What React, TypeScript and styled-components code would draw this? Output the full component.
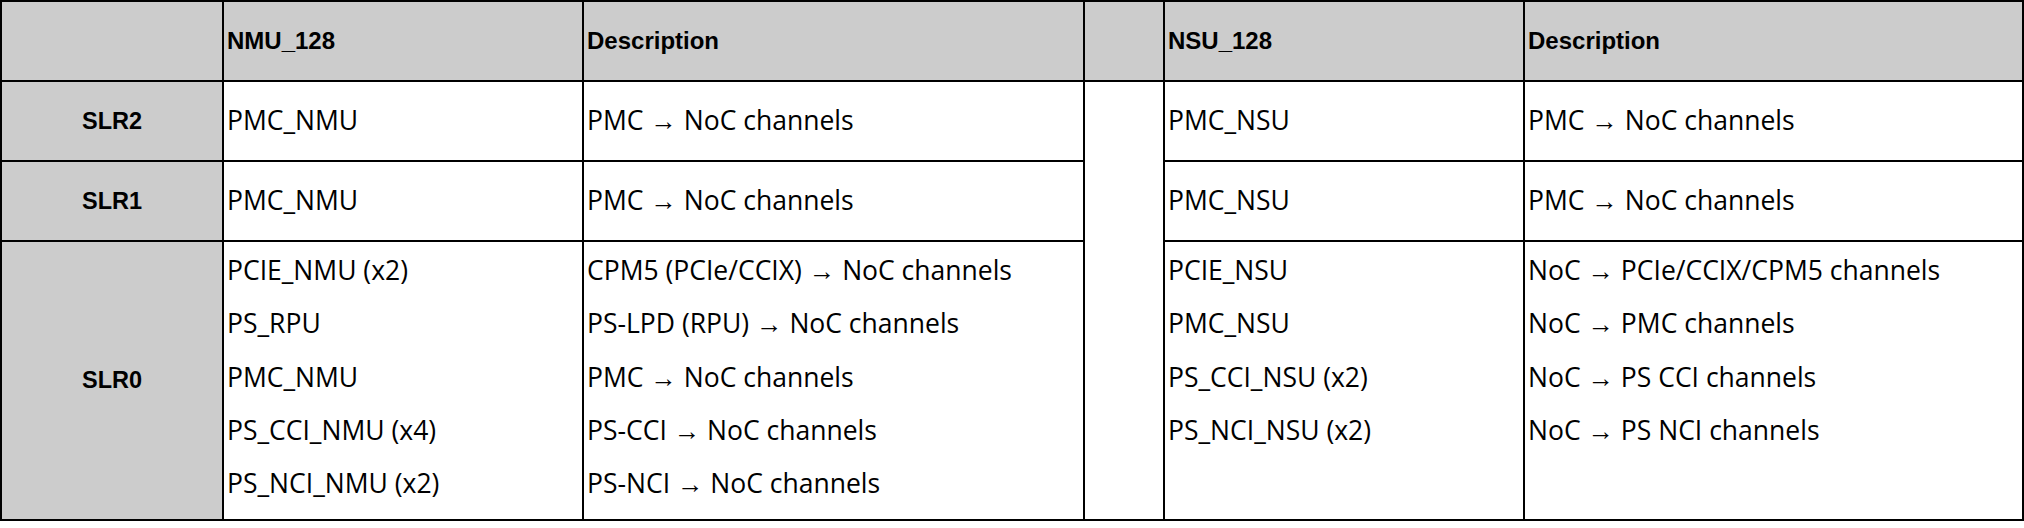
import styled, { createGlobalStyle } from 'styled-components';

const GlobalStyle = createGlobalStyle`
  html, body {
    margin: 0;
    padding: 0;
    background: #ffffff;
  }
`

const Grid = styled.table`
  width: 2024px;
  table-layout: fixed;
  border-collapse: collapse;
  border: 2px solid #000000;
  font-family: "Open Sans", "Noto Sans", sans-serif;
  color: #000000;
`

const Col = styled.col<{ $w: number }>`
  width: ${p => p.$w}px;
`

const Row = styled.tr<{ $h: number }>`
  height: ${p => p.$h}px;
`

const HeadCell = styled.th`
  background: #cccccc;
  border: 2px solid #000000;
  font-family: "Liberation Sans", Arial, sans-serif;
  font-weight: bold;
  font-size: 24px;
  text-align: left;
  vertical-align: middle;
  padding: 0 3px;
  white-space: nowrap;
`

const RowLabel = styled.th`
  background: #cccccc;
  border: 2px solid #000000;
  font-family: "Liberation Sans", Arial, sans-serif;
  font-weight: bold;
  font-size: 23.5px;
  text-align: center;
  vertical-align: middle;
  padding: 0;
`

const Cell = styled.td<{ $stack?: boolean }>`
  border: 2px solid #000000;
  padding: ${p => (p.$stack ? '2px 3px 0' : '0 3px')};
  vertical-align: ${p => (p.$stack ? 'top' : 'middle')};
  font-size: 26.5px;
  line-height: 53.3px;
  white-space: nowrap;
`

const Gap = styled.td`
  border: 2px solid #000000;
  background: #ffffff;
  padding: 0;
`

const Line = styled.div`
  line-height: 53.3px;
`

const singleRows = [
  { label: 'SLR2', nmu: 'PMC_NMU', nmuDesc: 'PMC → NoC channels', nsu: 'PMC_NSU', nsuDesc: 'PMC → NoC channels' },
  { label: 'SLR1', nmu: 'PMC_NMU', nmuDesc: 'PMC → NoC channels', nsu: 'PMC_NSU', nsuDesc: 'PMC → NoC channels' },
]

const slr0 = {
  nmu: ['PCIE_NMU (x2)', 'PS_RPU', 'PMC_NMU', 'PS_CCI_NMU (x4)', 'PS_NCI_NMU (x2)'],
  nmuDesc: [
    'CPM5 (PCIe/CCIX) → NoC channels',
    'PS-LPD (RPU) → NoC channels',
    'PMC → NoC channels',
    'PS-CCI → NoC channels',
    'PS-NCI → NoC channels',
  ],
  nsu: ['PCIE_NSU', 'PMC_NSU', 'PS_CCI_NSU (x2)', 'PS_NCI_NSU (x2)'],
  nsuDesc: [
    'NoC → PCIe/CCIX/CPM5 channels',
    'NoC → PMC channels',
    'NoC → PS CCI channels',
    'NoC → PS NCI channels',
  ],
}

const Stack = ({ items }: { items: string[] }) => (
  <Cell $stack>
    {items.map((t, i) => <Line key={i}>{t}</Line>)}
  </Cell>
)

export default function App() {
  return (
    <>
      <GlobalStyle />
      <Grid>
        <colgroup>
          <Col $w={222} />
          <Col $w={360} />
          <Col $w={501} />
          <Col $w={80} />
          <Col $w={360} />
          <Col $w={499} />
        </colgroup>
        <thead>
          <Row $h={80}>
            <HeadCell />
            <HeadCell>NMU_128</HeadCell>
            <HeadCell>Description</HeadCell>
            <HeadCell />
            <HeadCell>NSU_128</HeadCell>
            <HeadCell>Description</HeadCell>
          </Row>
        </thead>
        <tbody>
          {singleRows.map((r, i) => (
            <Row $h={80} key={r.label}>
              <RowLabel>{r.label}</RowLabel>
              <Cell>{r.nmu}</Cell>
              <Cell>{r.nmuDesc}</Cell>
              {i === 0 && <Gap rowSpan={3} />}
              <Cell>{r.nsu}</Cell>
              <Cell>{r.nsuDesc}</Cell>
            </Row>
          ))}
          <Row $h={279}>
            <RowLabel>SLR0</RowLabel>
            <Stack items={slr0.nmu} />
            <Stack items={slr0.nmuDesc} />
            <Stack items={slr0.nsu} />
            <Stack items={slr0.nsuDesc} />
          </Row>
        </tbody>
      </Grid>
    </>
  )
}
